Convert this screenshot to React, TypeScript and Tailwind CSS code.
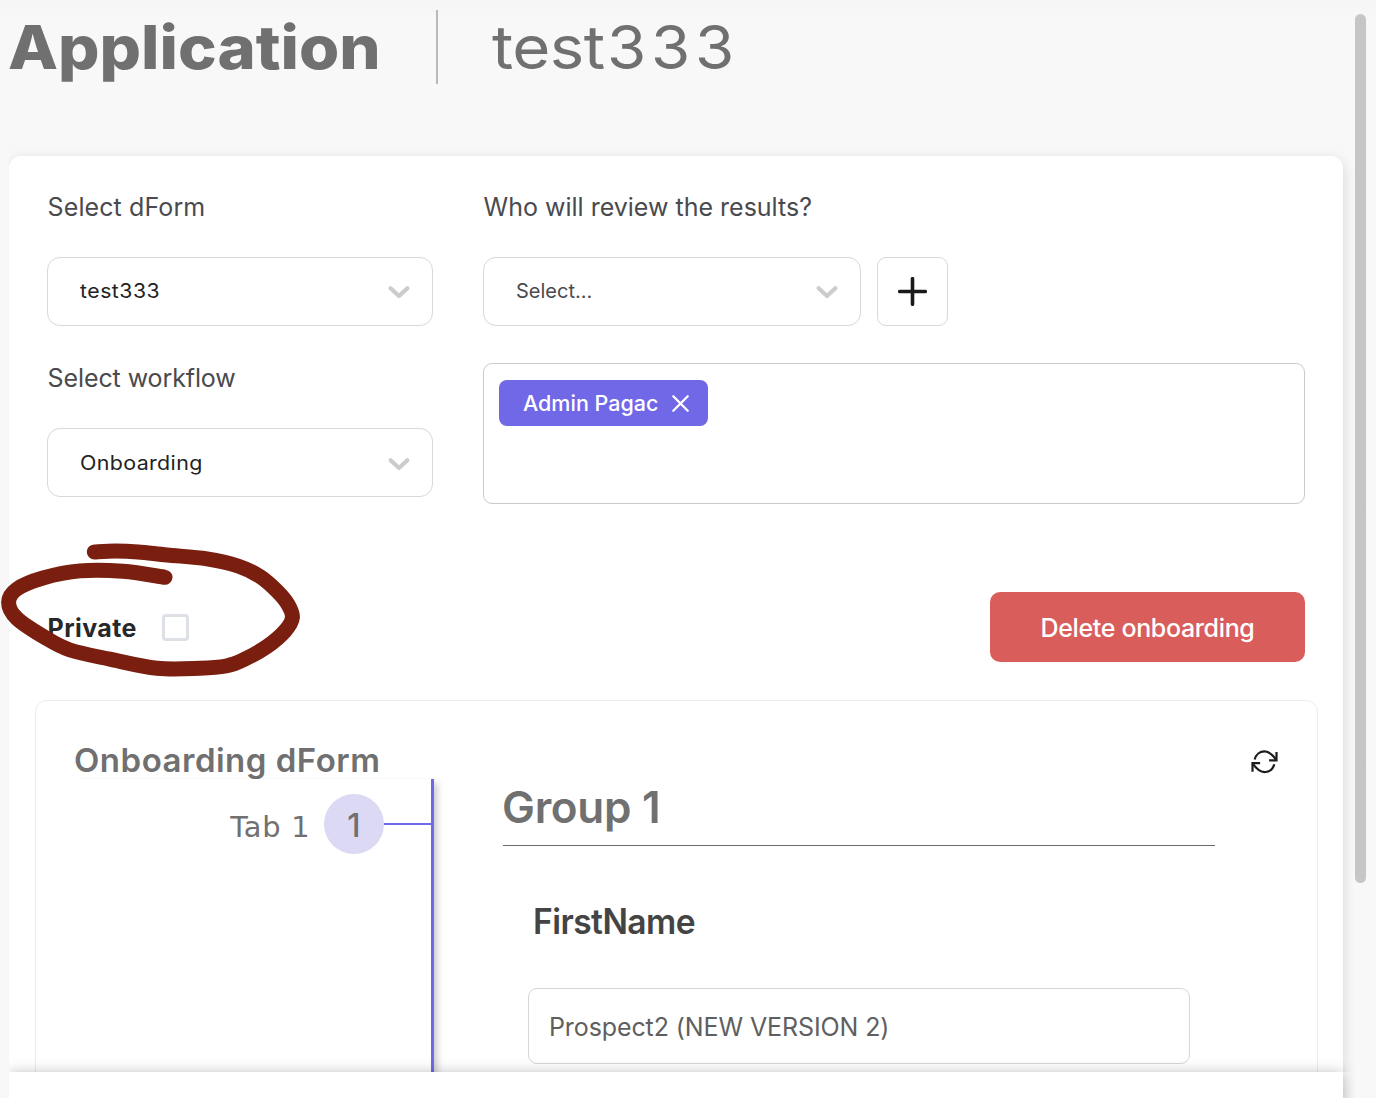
import type { ReactNode } from "react";

function Chevron() {
  return (
    <svg width="24" height="16" viewBox="0 0 24 16" fill="none" className="shrink-0">
      <path d="M3.6 4.200 12 12 20.4 4.200" stroke="#cccccc" strokeWidth="4.200" strokeLinecap="round" strokeLinejoin="round" />
    </svg>
  );
}

function SelectBox({ children, className }: { children: ReactNode; className: string }) {
  return (
    <div className={`flex h-[69px] items-center justify-between rounded-[13px] border border-[#d5d8dc] bg-white pr-[21px] pl-8 text-xl leading-none ${className}`}>
      {children}
      <Chevron />
    </div>
  );
}

function Label({ children, className }: { children: ReactNode; className?: string }) {
  return <div className={`h-[30px] pl-[0.6px] text-[25px] leading-[30px] text-[#4a4a4e] ${className ?? ""}`}>{children}</div>;
}

const strokePoints: [number, number][] = [
  [94.3, 551.9], [115, 551], [138, 551.9], [167, 555], [207, 558.8], [238, 566], [260, 576.5], [277, 591],
  [288, 604.5], [292.4, 617.5], [285, 631], [267, 646.5], [243, 660], [226, 666], [200, 668.2], [157, 668.2],
  [110, 659.2], [70, 650], [45, 637.5], [17, 618.5], [8.6, 602.5], [17, 589], [43, 578], [80, 570.9],
  [123, 571.3], [165, 577.3],
];

/** Catmull-Rom spline through the points, as a cubic path. */
function smoothPath(points: [number, number][]) {
  let d = `M${points[0][0]} ${points[0][1]}`;
  for (let i = 0; i < points.length - 1; i++) {
    const a = points[Math.max(i - 1, 0)];
    const b = points[i];
    const c = points[i + 1];
    const e = points[Math.min(i + 2, points.length - 1)];
    d += `C${b[0] + (c[0] - a[0]) / 6} ${b[1] + (c[1] - a[1]) / 6} ${c[0] - (e[0] - b[0]) / 6} ${c[1] - (e[1] - b[1]) / 6} ${c[0]} ${c[1]}`;
  }
  return d;
}

function Annotation() {
  return (
    <svg className="pointer-events-none absolute top-[540px] left-0" width="310" height="140" viewBox="0 540 310 140" fill="none">
      <path d={smoothPath(strokePoints)} stroke="#7a1f10" strokeWidth="15" strokeLinecap="round" strokeLinejoin="round" />
    </svg>
  );
}

function Header() {
  return (
    <header className="flex h-[156px] shrink-0 items-start text-[#707070]">
      <h1 className="w-[427px] text-[60px] leading-[94px] font-extrabold whitespace-nowrap">
        <span className="-ml-px inline-block origin-left scale-x-[1.085]">Application</span>
      </h1>
      <div className="mt-[10px] h-[74px] w-[2px] bg-[#b9b9b9]" />
      <div className="ml-[54px] text-[60px] leading-[94px]">
        <span className="inline-block origin-left scale-x-[1.090] tracking-[-0.500px]">test</span>
        <span className="ml-[12px] inline-block origin-left scale-x-[1.060] tracking-[4.500px]">333</span>
      </div>
    </header>
  );
}

function Settings() {
  return (
    <section className="flex px-[38px] pt-9">
      <div className="w-[386px]">
        <Label className="tracking-[0.100px]">Select dForm</Label>
        <SelectBox className="mt-[35px] text-[#222222]">
          <span className="-mt-px origin-left scale-x-[1.060] tracking-[0.500px]">test333</span>
        </SelectBox>
        <Label className="mt-[37px] tracking-[-0.100px]">Select workflow</Label>
        <SelectBox className="mt-[35px] pt-[2px] text-[#222222]">
          <span className="-mt-px origin-left scale-x-[1.070] tracking-[0.350px]">Onboarding</span>
        </SelectBox>
      </div>
      <div className="ml-[50px] w-[822px]">
        <Label>Who will review the results?</Label>
        <div className="mt-[35px] flex gap-4">
          <SelectBox className="w-[378px] text-[#4a4a4e]">
            <span className="-mt-px">Select...</span>
          </SelectBox>
          <button className="flex h-[69px] w-[71px] items-center justify-center rounded-[9px] border border-[#d5d8dc]">
            <svg width="29" height="29" viewBox="0.500 0.500 29 29" fill="none">
              <path d="M15 2.200V27.800M2.200 15H27.800" stroke="#1a1a1a" strokeWidth="3.600" strokeLinecap="round" />
            </svg>
          </button>
        </div>
        <div className="mt-[37px] h-[141px] rounded-[9px] border border-[#cbcbcb] px-[15px] pt-4">
          <div className="flex h-[46px] w-[209px] items-center justify-between rounded-lg bg-[#7168e8] pr-[18px] pl-6 text-[21.500px] font-medium whitespace-nowrap text-white">
            Admin Pagac
            <svg width="19" height="19" viewBox="0 0 19 19" fill="none">
              <path d="M2.300 2.300 16.700 16.700M16.700 2.300 2.300 16.700" stroke="white" strokeWidth="2.300" strokeLinecap="round" />
            </svg>
          </div>
        </div>
      </div>
    </section>
  );
}

function PrivateRow() {
  return (
    <section className="mt-[88px] flex h-[70px] items-center justify-between px-[38px]">
      <label className="flex items-center text-[25px] leading-[30px] font-bold tracking-[0.4px] text-[#26282a]">
        <span className="w-[115px] pt-[2px] pl-[0.600px]">Private</span>
        <span className="size-[27px] rounded-[4px] border-3 border-[#dde0e6] bg-white" />
      </label>
      <button className="h-[70px] w-[315px] rounded-[10px] bg-[#d95d5a] pt-[3px] text-[25px] font-medium tracking-[-0.350px] text-white">
        Delete onboarding
      </button>
    </section>
  );
}

function FormPreview() {
  return (
    <section className="mt-[38px] ml-[26px] h-[420px] w-[1283px] rounded-t-xl border border-[#ececec]">
      <div className="flex h-[78px] items-start justify-between pr-[38px] pl-[38px]">
        <h2 className="pt-[39px] text-[33px] leading-10 font-semibold tracking-[0.500px] text-[#707070]">Onboarding dForm</h2>
        <svg className="mt-[47px]" width="30" height="28" viewBox="-0.500 0.500 30 28" fill="none" stroke="#1c1c1c" strokeWidth="2.200">
          <path d="M5.200 12C6.400 7 10.400 3.900 15 3.900C19.600 3.900 22.400 6.400 26.600 12M24.800 16.800C23.500 21.600 19.600 24.600 15 24.600C10.400 24.600 7.200 21.800 3 15.900" />
          <path d="M19.600 12.800H27V4.600M10.600 15.700H3V24.200" />
        </svg>
      </div>
      <div className="flex h-[340px]">
        <aside className="ml-[38px] flex w-[360px] items-start justify-end border-r-3 border-[#7168e8] bg-white pt-[15px] shadow-[3px_4px_7px_rgba(0,0,0,0.22)] [clip-path:inset(-1px_-14px_0px_0px)]">
          <span className="origin-right scale-x-[1.050] pt-[3px] font-['DejaVu_Sans'] text-[27.500px] leading-[60px] tracking-[0.700px] text-[#707070]">Tab 1</span>
          <span className="ml-[14px] flex size-[60px] items-center justify-center rounded-full bg-[#dcd9f5] pt-[3px] text-[32px] font-medium text-[#707070]">1</span>
          <span className="mt-[29px] h-0.5 w-[47px] bg-[#7168e8]" />
        </aside>
        <div className="ml-[69px] w-[712px]">
          <h3 className="h-[67px] border-b border-[#6b6b6b] pt-[3px] text-[44px] leading-[50px] font-semibold tracking-[-0.300px] text-[#707070]">
            <span className="-ml-px">Group 1</span>
          </h3>
          <div className="pt-[55px] pl-[29.500px] text-[35px] leading-10 font-semibold text-[#444444]">
            <span className="inline-block origin-left scale-x-[0.960] tracking-[-0.600px]">FirstName</span>
          </div>
          <div className="mt-[47px] ml-[25px] flex h-[76px] w-[662px] items-center rounded-[9px] border border-[#d6d6d6] bg-white pt-[2px] pl-5 text-[25px] leading-[30px] tracking-[-0.100px] text-[#5f5f5f]">
            Prospect2 (NEW VERSION 2)
          </div>
        </div>
      </div>
    </section>
  );
}

export default function App() {
  return (
    <div className="relative flex h-[1098px] w-[1376px] overflow-hidden bg-[#f8f8f8] bg-linear-to-b from-[#f5f5f5] to-[#f8f8f8] to-[18px] pl-[9px] font-['Inter',sans-serif]">
      <main className="flex w-[1346px] flex-col overflow-hidden">
        <div className="flex h-[1072px] shrink-0 flex-col overflow-hidden">
          <Header />
          <div className="h-[960px] w-[1334px] shrink-0 rounded-xl bg-white shadow-[0_4px_14px_rgba(0,0,0,0.14)]">
            <Settings />
            <PrivateRow />
            <FormPreview />
          </div>
        </div>
        <footer className="relative h-[60px] w-[1334px] shrink-0 bg-white shadow-[0_2px_14px_rgba(0,0,0,0.3)]" />
      </main>
      <div className="mt-3.5 h-[869px] w-[11px] rounded-full bg-[#c6c6c6]" />
      <Annotation />
    </div>
  );
}
